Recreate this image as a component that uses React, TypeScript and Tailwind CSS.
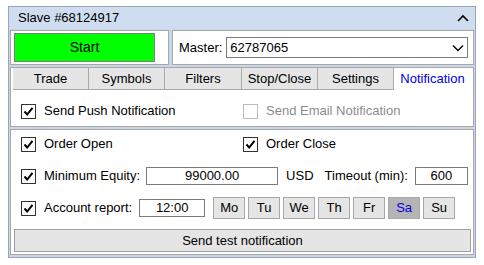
import React from "react";

const Check = ({ on = true, disabled = false }: { on?: boolean; disabled?: boolean }) => (
  <div
    className={`w-[15px] h-[15px] border ${disabled ? "border-[#bcbcbc]" : "border-[#333]"} bg-white flex items-center justify-center shrink-0`}
  >
    {on && (
      <svg width="11" height="11" viewBox="0 0 11 11">
        <path d="M1.5 5.5 L4.2 8.5 L9.5 1.8" fill="none" stroke="#000" strokeWidth="2" />
      </svg>
    )}
  </div>
);

const days = ["Mo", "Tu", "We", "Th", "Fr", "Sa", "Su"];
const tabs = ["Trade", "Symbols", "Filters", "Stop/Close", "Settings", "Notification"];
const tabW = [76, 76, 77, 76, 76, 77];

export default function App() {
  return (
    <div
      className="w-[484px] h-[265px] bg-white pt-[6px] pl-[8px] text-[13px] text-black"
      style={{ fontFamily: '"Liberation Sans", Arial, sans-serif' }}
    >
      <div className="w-[468px] h-[252px] border border-[#9aa5b5] bg-[#c9d6e8] flex flex-col">
        {/* header */}
        <div className="h-[22px] bg-[#cfddf1] flex items-center justify-between pl-[9px] pr-[6px]">
          <span>Slave #68124917</span>
          <svg width="12" height="8" viewBox="0 0 12 8">
            <path d="M1 7 L6 2 L11 7" fill="none" stroke="#000" strokeWidth="1.6" />
          </svg>
        </div>
        <div className="flex flex-col px-[1px] pb-[1px] pt-[1px] gap-[2px]">
          {/* row 1 */}
          <div className="flex gap-[3px] h-[35px]">
            <div className="w-[159px] h-full bg-white border border-[#a9a9a9] flex items-center pl-[3px]">
              <div className="w-[141px] h-[29px] bg-[#00ff00] border border-[#7f7f7f] flex items-center justify-center text-[14px]">
                Start
              </div>
            </div>
            <div className="flex-1 h-full bg-white border border-[#a9a9a9] flex items-center pl-[6px] pr-[5px]">
              <span className="mr-[4px]">Master:</span>
              <div className="flex-1 h-[21px] border border-[#7a7a7a] flex items-center justify-between pl-[3px] pr-[3px]">
                <span>62787065</span>
                <svg width="12" height="8" viewBox="0 0 12 8">
                  <path d="M1 1.5 L6 6.5 L11 1.5" fill="none" stroke="#000" strokeWidth="1.4" />
                </svg>
              </div>
            </div>
          </div>
          {/* tabs + content */}
          <div className="flex flex-col">
            <div className="flex h-[23px] bg-white border border-[#a9a9a9] border-b-0 pl-[2px]">
              {tabs.map((t, i) => {
                const active = i === tabs.length - 1;
                return (
                  <div
                    key={t}
                    style={{ width: tabW[i] }}
                    className={`flex items-center justify-center border-[#a9a9a9] ${
                      active
                        ? "bg-white text-[#0000e6]"
                        : "bg-[#e5e5e5] border-r border-b"
                    }`}
                  >
                    {t}
                  </div>
                );
              })}
            </div>
            <div className="h-[37px] bg-white border border-[#a9a9a9] border-t-0 flex items-center pt-[6px] pl-[10px]">
              <div className="flex items-center w-[222px]">
                <Check />
                <span className="ml-[8px]">Send Push Notification</span>
              </div>
              <div className="flex items-center">
                <Check on={false} disabled />
                <span className="ml-[8px] text-[#8c8c8c]">Send Email Notification</span>
              </div>
            </div>
          </div>
          {/* options */}
          <div className="h-[126px] bg-white border border-[#a9a9a9] flex flex-col pl-[10px] pr-[5px] pt-[6px]">
            <div className="flex items-center h-[16px]">
              <div className="flex items-center w-[222px]">
                <Check />
                <span className="ml-[8px]">Order Open</span>
              </div>
              <div className="flex items-center">
                <Check />
                <span className="ml-[8px]">Order Close</span>
              </div>
            </div>
            <div className="flex items-center h-[18px] mt-[15px]">
              <Check />
              <span className="ml-[8px]">Minimum Equity:</span>
              <div className="ml-[6px] w-[132px] h-[18px] border border-[#7a7a7a] flex items-center justify-center">
                99000.00
              </div>
              <span className="ml-[8px]">USD</span>
              <span className="ml-[11px]">Timeout (min):</span>
              <div className="ml-[7px] w-[53px] h-[18px] border border-[#7a7a7a] flex items-center justify-center">
                600
              </div>
            </div>
            <div className="flex items-center h-[22px] mt-[12px]">
              <Check />
              <span className="ml-[8px]">Account report:</span>
              <div className="ml-[7px] w-[66px] h-[18px] border border-[#7a7a7a] flex items-center justify-center">
                12:00
              </div>
              <div className="flex ml-[8px] gap-[3px]">
                {days.map((d) => (
                  <div
                    key={d}
                    className={`w-[32px] h-[22px] border border-[#a9a9a9] flex items-center justify-center ${
                      d === "Sa" ? "bg-[#b4b4b4] text-[#0000e6]" : "bg-[#e5e5e5]"
                    }`}
                  >
                    {d}
                  </div>
                ))}
              </div>
            </div>
            <div className="mt-[10px] -ml-[7px] w-[457px] h-[23px] bg-[#e5e5e5] border border-[#a0a0a0] flex items-center justify-center">
              Send test notification
            </div>
          </div>
        </div>
      </div>
    </div>
  );
}
